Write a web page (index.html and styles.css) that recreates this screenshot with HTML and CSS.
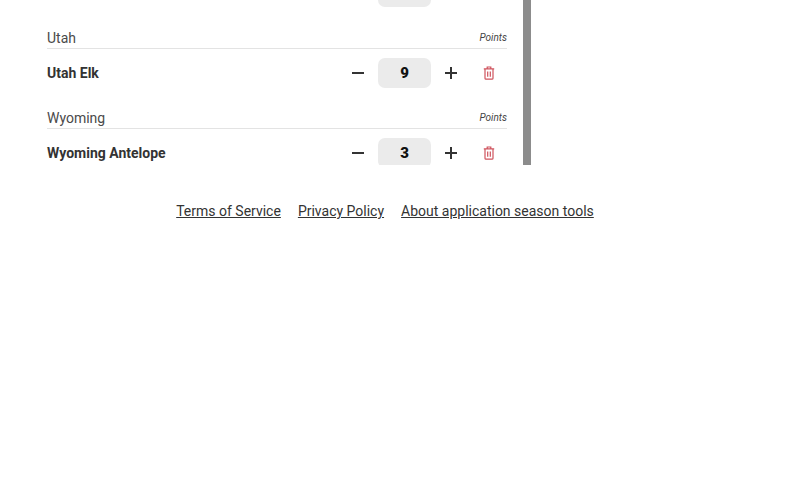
FILE: index.html
```html
<!DOCTYPE html>
<html lang="en">
<head>
  <meta charset="UTF-8">
  <title>Application season points</title>
  <meta name="viewport" content="width=device-width, initial-scale=1.0">
  <link rel="stylesheet" href="styles.css">
</head>
<body>

<div class="panel">
  <div class="list">
    <!-- row above the fold, only the bottom of its value shows -->
    <div class="row row-cut">
      <div class="value"></div>
    </div>

    <div class="state">
      <div class="state-head"><span class="state-name">Utah</span><span class="points-label">Points</span></div>
      <div class="row">
        <span class="species">Utah Elk</span>
        <div class="stepper">
          <svg class="step-icon" viewBox="0 0 14 14"><path d="M1 7h12"/></svg>
          <div class="value">9</div>
          <svg class="step-icon" viewBox="0 0 14 14"><path d="M1 7h12M7 1v12"/></svg>
          <svg class="trash" viewBox="0 0 12 14"><path d="M4.2 2.5V1h3.6v1.5M.8 2.8h10.4M2 2.8v9.4c0 .6.4 1 1 1h6c.6 0 1-.4 1-1V2.800M4.700 5.500v5.200M7.300 5.500v5.200"/></svg>
        </div>
      </div>
    </div>

    <div class="state">
      <div class="state-head"><span class="state-name">Wyoming</span><span class="points-label">Points</span></div>
      <div class="row">
        <span class="species">Wyoming Antelope</span>
        <div class="stepper">
          <svg class="step-icon" viewBox="0 0 14 14"><path d="M1 7h12"/></svg>
          <div class="value">3</div>
          <svg class="step-icon" viewBox="0 0 14 14"><path d="M1 7h12M7 1v12"/></svg>
          <svg class="trash" viewBox="0 0 12 14"><path d="M4.2 2.5V1h3.6v1.5M.8 2.8h10.4M2 2.8v9.4c0 .6.4 1 1 1h6c.6 0 1-.4 1-1V2.800M4.700 5.500v5.200M7.300 5.500v5.200"/></svg>
        </div>
      </div>
    </div>
  </div>
  <div class="scrollbar"></div>
</div>

<div class="footer">
  <a href="#">Terms of Service</a>
  <a href="#">Privacy Policy</a>
  <a href="#">About application season tools</a>
</div>

</body>
</html>
```

FILE: styles.css
```css
body { margin: 0; font-family: Roboto, sans-serif; background: #fff; color: #333; }

.panel { display: flex; width: 531px; height: 165px; overflow: hidden; }
.list { width: 460px; margin-left: 47px; flex: none; }
.scrollbar { width: 8px; height: 165px; margin-left: 16px; background: #8c8c8c; flex: none; }

.row { display: flex; align-items: center; justify-content: space-between; height: 30px; margin-top: 9px; }
.row-cut { margin-top: -23px; justify-content: flex-end; padding-right: 76px; }

.state { margin-top: 21px; }
.state + .state { margin-top: 20px; }
.state-head { display: flex; justify-content: space-between; height: 20px; border-bottom: 1px solid #e3e3e3; }
.state-name { font-size: 14px; line-height: 20px; color: #4a4a4a; }
.points-label { font-size: 10px; line-height: 20px; font-style: italic; color: #444; }

.species { font-size: 14px; font-weight: 700; color: #333; }

.stepper { display: flex; align-items: center; }
.value {
  width: 53px; height: 30px; background: #ebebeb; border-radius: 7px;
  font-size: 15px; font-weight: 900; line-height: 30px;
  text-align: center; color: #111;
}
.step-icon { width: 14px; height: 14px; margin: 0 13px; fill: none; stroke: #333; stroke-width: 2; }
.trash { width: 12px; height: 14px; margin-left: 12px; margin-right: 12px; fill: none; stroke: #cf535d; stroke-width: 1.2; }

.footer { display: flex; justify-content: center; gap: 17px; margin-top: 38px; width: 770px; font-size: 14px; line-height: 17px; }
.footer a { color: #333; text-decoration: underline; }
```
